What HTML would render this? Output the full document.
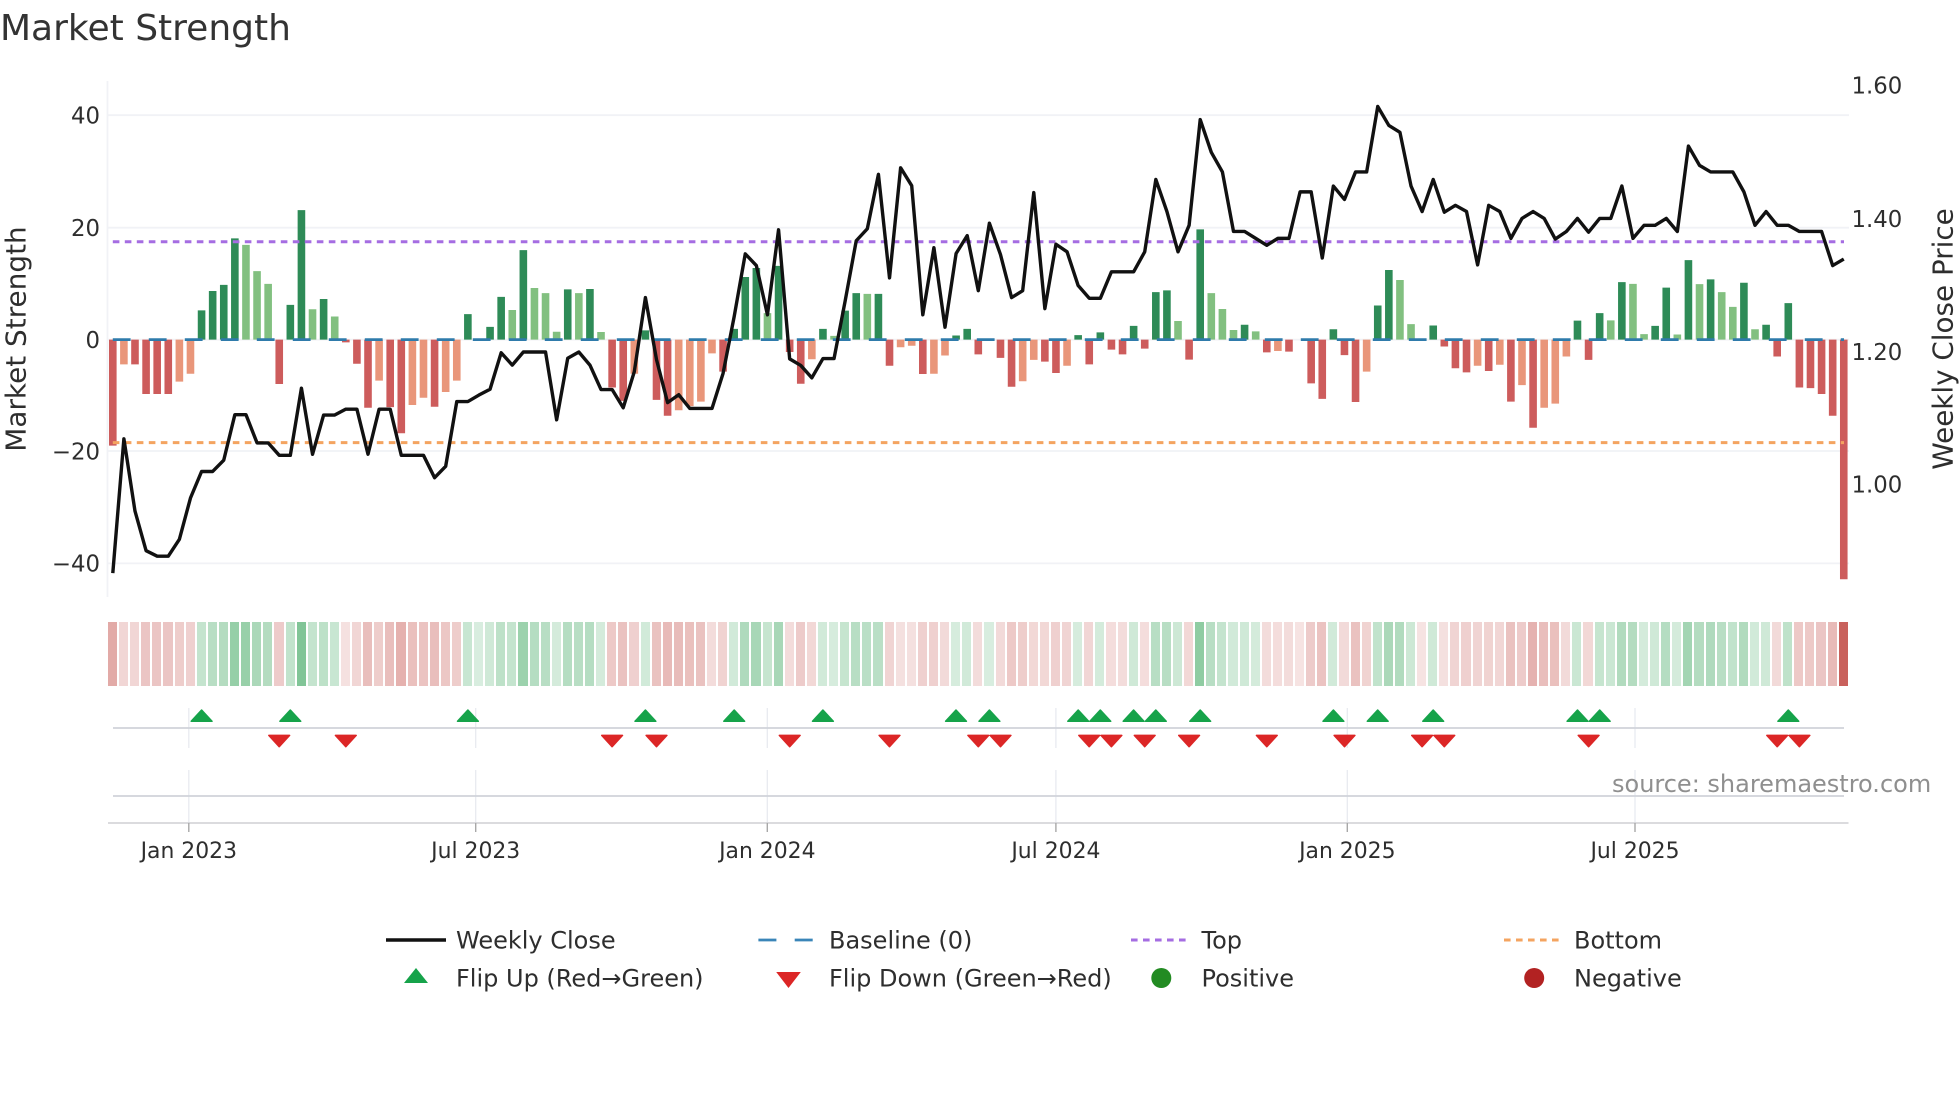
<!DOCTYPE html>
<html><head><meta charset="utf-8"><title>Market Strength</title>
<style>
html,body{margin:0;padding:0;background:#fff;width:1960px;height:1102px;overflow:hidden}
svg{position:absolute;left:0;top:0}
text{font-family:"DejaVu Sans","Liberation Sans",sans-serif;fill:#2e2e2e}
#heat{position:absolute;left:108px;top:622px;width:1741.07px;height:64px;display:flex}
#heat b{flex:1 1 0;height:64px;margin-right:2px;display:block}
.r{background:#c0453f}.g{background:#1a9641}
.nss{vector-effect:non-scaling-stroke;fill:none}
</style></head><body>
<div id="heat"><b class=r style=opacity:.46></b><b class=r style=opacity:.22></b><b class=r style=opacity:.22></b><b class=r style=opacity:.31></b><b class=r style=opacity:.31></b><b class=r style=opacity:.31></b><b class=r style=opacity:.27></b><b class=r style=opacity:.25></b><b class=g style=opacity:.26></b><b class=g style=opacity:.31></b><b class=g style=opacity:.33></b><b class=g style=opacity:.46></b><b class=g style=opacity:.45></b><b class=g style=opacity:.37></b><b class=g style=opacity:.33></b><b class=r style=opacity:.28></b><b class=g style=opacity:.27></b><b class=g style=opacity:.55></b><b class=g style=opacity:.26></b><b class=g style=opacity:.29></b><b class=g style=opacity:.24></b><b class=r style=opacity:.16></b><b class=r style=opacity:.22></b><b class=r style=opacity:.35></b><b class=r style=opacity:.27></b><b class=r style=opacity:.35></b><b class=r style=opacity:.42></b><b class=r style=opacity:.34></b><b class=r style=opacity:.32></b><b class=r style=opacity:.35></b><b class=r style=opacity:.3></b><b class=r style=opacity:.27></b><b class=g style=opacity:.24></b><b class=g style=opacity:.17></b><b class=g style=opacity:.21></b><b class=g style=opacity:.29></b><b class=g style=opacity:.26></b><b class=g style=opacity:.43></b><b class=g style=opacity:.32></b><b class=g style=opacity:.31></b><b class=g style=opacity:.19></b><b class=g style=opacity:.32></b><b class=g style=opacity:.31></b><b class=g style=opacity:.32></b><b class=g style=opacity:.19></b><b class=r style=opacity:.29></b><b class=r style=opacity:.33></b><b class=r style=opacity:.25></b><b class=g style=opacity:.2></b><b class=r style=opacity:.33></b><b class=r style=opacity:.37></b><b class=r style=opacity:.36></b><b class=r style=opacity:.34></b><b class=r style=opacity:.33></b><b class=r style=opacity:.19></b><b class=r style=opacity:.24></b><b class=g style=opacity:.2></b><b class=g style=opacity:.35></b><b class=g style=opacity:.38></b><b class=g style=opacity:.25></b><b class=g style=opacity:.38></b><b class=r style=opacity:.19></b><b class=r style=opacity:.28></b><b class=r style=opacity:.21></b><b class=g style=opacity:.2></b><b class=g style=opacity:.18></b><b class=g style=opacity:.25></b><b class=g style=opacity:.31></b><b class=g style=opacity:.3></b><b class=g style=opacity:.3></b><b class=r style=opacity:.23></b><b class=r style=opacity:.17></b><b class=r style=opacity:.17></b><b class=r style=opacity:.25></b><b class=r style=opacity:.25></b><b class=r style=opacity:.2></b><b class=g style=opacity:.18></b><b class=g style=opacity:.2></b><b class=r style=opacity:.19></b><b class=g style=opacity:.17></b><b class=r style=opacity:.2></b><b class=r style=opacity:.29></b><b class=r style=opacity:.27></b><b class=r style=opacity:.21></b><b class=r style=opacity:.21></b><b class=r style=opacity:.25></b><b class=r style=opacity:.23></b><b class=g style=opacity:.18></b><b class=r style=opacity:.22></b><b class=g style=opacity:.19></b><b class=r style=opacity:.18></b><b class=r style=opacity:.19></b><b class=g style=opacity:.21></b><b class=r style=opacity:.18></b><b class=g style=opacity:.31></b><b class=g style=opacity:.31></b><b class=g style=opacity:.22></b><b class=r style=opacity:.21></b><b class=g style=opacity:.49></b><b class=g style=opacity:.31></b><b class=g style=opacity:.26></b><b class=g style=opacity:.2></b><b class=g style=opacity:.21></b><b class=g style=opacity:.19></b><b class=r style=opacity:.19></b><b class=r style=opacity:.18></b><b class=r style=opacity:.19></b><b class=r style=opacity:.15></b><b class=r style=opacity:.28></b><b class=r style=opacity:.32></b><b class=g style=opacity:.2></b><b class=r style=opacity:.2></b><b class=r style=opacity:.33></b><b class=r style=opacity:.24></b><b class=g style=opacity:.27></b><b class=g style=opacity:.37></b><b class=g style=opacity:.34></b><b class=g style=opacity:.22></b><b class=r style=opacity:.15></b><b class=g style=opacity:.21></b><b class=r style=opacity:.17></b><b class=r style=opacity:.23></b><b class=r style=opacity:.25></b><b class=r style=opacity:.23></b><b class=r style=opacity:.24></b><b class=r style=opacity:.22></b><b class=r style=opacity:.33></b><b class=r style=opacity:.28></b><b class=r style=opacity:.41></b><b class=r style=opacity:.35></b><b class=r style=opacity:.34></b><b class=r style=opacity:.2></b><b class=g style=opacity:.23></b><b class=r style=opacity:.21></b><b class=g style=opacity:.25></b><b class=g style=opacity:.23></b><b class=g style=opacity:.34></b><b class=g style=opacity:.33></b><b class=g style=opacity:.19></b><b class=g style=opacity:.21></b><b class=g style=opacity:.32></b><b class=g style=opacity:.19></b><b class=g style=opacity:.4></b><b class=g style=opacity:.33></b><b class=g style=opacity:.35></b><b class=g style=opacity:.31></b><b class=g style=opacity:.27></b><b class=g style=opacity:.34></b><b class=g style=opacity:.2></b><b class=g style=opacity:.21></b><b class=r style=opacity:.2></b><b class=g style=opacity:.28></b><b class=r style=opacity:.29></b><b class=r style=opacity:.29></b><b class=r style=opacity:.31></b><b class=r style=opacity:.37></b><b class=r style=opacity:.85></b></div>

<svg width="1960" height="1102" viewBox="0 0 1960 1102" xmlns="http://www.w3.org/2000/svg">
<text x="0" y="40" font-size="36" style="fill:#333">Market Strength</text>

<!-- main panel grid -->
<g stroke="#f1f2f6" stroke-width="1.8" fill="none">
<path d="M107.5 81V597"/>
<path d="M108 115.2H1849M108 227.7H1849M108 339.6H1849M108 451H1849M108 563.4H1849"/>
</g>

<!-- bars -->
<g transform="translate(112.8,60) scale(11.096,0.34435)" stroke-width="7.6">
<path class="nss" stroke="#cd5c5c" d="M0 812V1120M2 812V884M3 812V970M4 812V970M5 812V970M15 812V941M21 812V820M22 812V882M23 812V1010M25 812V1008M26 812V1084M29 812V1007M45 812V951M46 812V990M49 812V987M50 812V1033M55 812V905M61 812V848M62 812V940M70 812V888M73 812V912M78 812V855M80 812V865M81 812V949M84 812V876M85 812V909M88 812V884M90 812V841M91 812V855M93 812V838M97 812V870M104 812V849M106 812V847M108 812V939M109 812V984M111 812V857M112 812V993M120 812V832M121 812V895M122 812V907M124 812V903M126 812V992M128 812V1068M133 812V871M150 812V861M152 812V951M153 812V953M154 812V970M155 812V1033M156 812V1508"/>
<path class="nss" stroke="#e9967a" d="M1 812V884M6 812V934M7 812V911M24 812V931M27 812V1002M28 812V981M30 812V964M31 812V931M47 812V911M51 812V1017M52 812V1005M53 812V992M54 812V852M63 812V869M71 812V834M72 812V830M74 812V911M75 812V858M82 812V933M83 812V871M86 812V888M105 812V845M113 812V905M123 812V888M125 812V885M127 812V944M129 812V1010M130 812V998M131 812V861"/>
<path class="nss" stroke="#2e8b57" d="M8 812V727M9 812V671M10 812V653M11 812V518M16 812V711M17 812V436M19 812V694M32 812V738M34 812V775M35 812V688M37 812V552M41 812V666M43 812V665M48 812V785M56 812V781M57 812V630M58 812V604M60 812V598M64 812V781M66 812V728M67 812V677M69 812V679M76 812V800M77 812V781M87 812V799M89 812V791M92 812V772M94 812V674M95 812V669M98 812V492M102 812V769M110 812V782M114 812V713M115 812V610M119 812V771M132 812V757M134 812V735M136 812V645M139 812V772M140 812V661M142 812V581M144 812V637M147 812V647M149 812V769M151 812V706"/>
<path class="nss" stroke="#82c080" d="M12 812V537M13 812V613M14 812V650M18 812V724M20 812V745M36 812V726M38 812V662M39 812V677M40 812V789M42 812V677M44 812V790M59 812V735M65 812V801M68 812V679M96 812V758M99 812V677M100 812V723M101 812V784M103 812V788M116 812V639M117 812V767M135 812V756M137 812V650M138 812V796M141 812V797M143 812V651M145 812V674M146 812V717M148 812V782"/>
</g>

<!-- reference lines -->
<path d="M112.8 339.6H1844" stroke="#2f7bab" stroke-width="2.8" stroke-dasharray="17.8 18.2" fill="none"/>
<path d="M112.8 241.8H1844" stroke="#a56de2" stroke-width="3" stroke-dasharray="6.6 5.4" fill="none"/>
<path d="M112.8 442.6H1844" stroke="#f4a460" stroke-width="3" stroke-dasharray="6.6 5.4" fill="none"/>

<!-- price line -->
<g transform="translate(112.8,60) scale(11.096,0.34435)">
<polyline class="nss" stroke="#111" stroke-width="3.4" stroke-linejoin="round" points="0,1490 1,1100 2,1310 3,1425 4,1441 5,1441 6,1392 7,1272 8,1195 9,1195 10,1162 11,1030 12,1030 13,1112 14,1112 15,1148 16,1148 17,953 18,1145 19,1031 20,1031 21,1014 22,1014 23,1145 24,1014 25,1014 26,1148 27,1148 28,1148 29,1213 30,1180 31,992 32,992 33,973 34,956 35,850 36,886 37,848 38,848 39,848 40,1045 41,866 42,848 43,886 44,957 45,957 46,1010 47,905 48,690 49,870 50,995 51,972 52,1012 53,1012 54,1012 55,910 56,745 57,563 58,597 59,740 60,493 61,868 62,887 63,923 64,867 65,867 66,700 67,525 68,490 69,332 70,633 71,313 72,365 73,740 74,545 75,776 76,562 77,510 78,670 79,474 80,565 81,690 82,670 83,385 84,722 85,535 86,557 87,655 88,692 89,692 90,615 91,615 92,615 93,557 94,347 95,440 96,557 97,480 98,173 99,268 100,325 101,498 102,498 103,518 104,538 105,518 106,518 107,383 108,383 109,575 110,366 111,405 112,325 113,325 114,135 115,190 116,210 117,366 118,440 119,347 120,442 121,422 122,440 123,595 124,422 125,440 126,518 127,460 128,440 129,460 130,520 131,498 132,460 133,500 134,460 135,460 136,366 137,518 138,480 139,480 140,460 141,498 142,250 143,306 144,325 145,325 146,325 147,383 148,480 149,440 150,480 151,480 152,498 153,498 154,498 155,597 156,578"/>
</g>

<!-- axis tick labels -->
<g font-size="22.8">
<text x="100" y="123.5" text-anchor="end">40</text>
<text x="100" y="236" text-anchor="end">20</text>
<text x="100" y="348" text-anchor="end">0</text>
<text x="100" y="459.3" text-anchor="end">−20</text>
<text x="100" y="571.7" text-anchor="end">−40</text>
<text x="1851.5" y="93.5">1.60</text>
<text x="1851.5" y="226.8">1.40</text>
<text x="1851.5" y="360">1.20</text>
<text x="1851.5" y="492.5">1.00</text>
</g>
<text transform="translate(25.5,339) rotate(-90)" font-size="27.9" text-anchor="middle">Market Strength</text>
<text transform="translate(1952.5,339) rotate(-90)" font-size="27.8" text-anchor="middle">Weekly Close Price</text>

<!-- flip panel gridlines -->
<path d="M188.8 708V748M188.8 770V823M475.7 708V748M475.7 770V823M767.3 708V748M767.3 770V823M1055.9 708V748M1055.9 770V823M1347.3 708V748M1347.3 770V823M1635 708V748M1635 770V823" stroke="#e8eaf0" stroke-width="1.3" fill="none"/>
<path d="M113 728H1844M113 796H1844" stroke="#d0d3da" stroke-width="1.8" fill="none"/>
<path d="M108 823H1848.5" stroke="#cfcfd3" stroke-width="1.6" fill="none"/>
<path d="M188.8 823V832M475.7 823V832M767.3 823V832M1055.9 823V832M1347.3 823V832M1635 823V832" stroke="#a8a8a8" stroke-width="1.4" fill="none"/>

<!-- up triangles -->
<path fill="#16a34a" stroke="#16a34a" stroke-width="1.5" stroke-linejoin="round" d="M201.6 710l10.4 11.3h-20.8zM290.3 710l10.4 11.3h-20.8zM467.9 710l10.4 11.3h-20.8zM645.4 710l10.4 11.3h-20.8zM734.2 710l10.4 11.3h-20.8zM822.9 710l10.4 11.3h-20.8zM956 710l10.4 11.3h-20.8zM989.4 710l10.4 11.3h-20.8zM1078.2 710l10.4 11.3h-20.8zM1100.3 710l10.4 11.3h-20.8zM1133.6 710l10.4 11.3h-20.8zM1155.8 710l10.4 11.3h-20.8zM1200.2 710l10.4 11.3h-20.8zM1333.4 710l10.4 11.3h-20.8zM1377.7 710l10.4 11.3h-20.8zM1433.2 710l10.4 11.3h-20.8zM1577.5 710l10.4 11.3h-20.8zM1599.7 710l10.4 11.3h-20.8zM1788.3 710l10.4 11.3h-20.8z"/>
<!-- down triangles -->
<path fill="#dc2626" stroke="#dc2626" stroke-width="1.5" stroke-linejoin="round" d="M279.2 746.7l10.4 -11.3h-20.8zM345.8 746.7l10.4 -11.3h-20.8zM612.1 746.7l10.4 -11.3h-20.8zM656.5 746.7l10.4 -11.3h-20.8zM789.7 746.7l10.4 -11.3h-20.8zM889.5 746.7l10.4 -11.3h-20.8zM978.3 746.7l10.4 -11.3h-20.8zM1000.5 746.7l10.4 -11.3h-20.8zM1089.2 746.7l10.4 -11.3h-20.8zM1111.4 746.7l10.4 -11.3h-20.8zM1144.7 746.7l10.4 -11.3h-20.8zM1189.1 746.7l10.4 -11.3h-20.8zM1266.8 746.7l10.4 -11.3h-20.8zM1344.5 746.7l10.4 -11.3h-20.8zM1422.1 746.7l10.4 -11.3h-20.8zM1444.3 746.7l10.4 -11.3h-20.8zM1588.6 746.7l10.4 -11.3h-20.8zM1777.2 746.7l10.4 -11.3h-20.8zM1799.4 746.7l10.4 -11.3h-20.8z"/>

<!-- bottom ticks -->
<g font-size="21.9" text-anchor="middle">
<text x="188.8" y="858">Jan 2023</text>
<text x="475.7" y="858">Jul 2023</text>
<text x="767.3" y="858">Jan 2024</text>
<text x="1055.9" y="858">Jul 2024</text>
<text x="1347.3" y="858">Jan 2025</text>
<text x="1635" y="858">Jul 2025</text>
</g>

<text x="1612" y="792" font-size="24" style="fill:#8f8f8f">source: sharemaestro.com</text>

<!-- legend -->
<path d="M386 940H446" stroke="#111" stroke-width="3.4" fill="none"/>
<path d="M758.4 940H813" stroke="#3a85b8" stroke-width="2.8" stroke-dasharray="18 18.3" fill="none"/>
<path d="M1131 940H1186" stroke="#a56de2" stroke-width="3" stroke-dasharray="6.6 5.4" fill="none"/>
<path d="M1504 940H1559" stroke="#f4a460" stroke-width="3" stroke-dasharray="6.6 5.4" fill="none"/>
<path d="M416 968l12 15h-24z" fill="#16a34a"/>
<path d="M788.5 988l12.3 -16h-24.6z" fill="#dc2626"/>
<circle cx="1161.3" cy="978" r="10" fill="#228b22"/>
<circle cx="1534.2" cy="978" r="10" fill="#b22222"/>
<g font-size="24">
<text x="456" y="948.5">Weekly Close</text>
<text x="829" y="948.5">Baseline (0)</text>
<text x="1201.5" y="948.5">Top</text>
<text x="1574" y="948.5">Bottom</text>
<text x="456" y="986.5">Flip Up (Red→Green)</text>
<text x="829" y="986.5">Flip Down (Green→Red)</text>
<text x="1201.5" y="986.5">Positive</text>
<text x="1574" y="986.5">Negative</text>
</g>
</svg>
</body></html>
